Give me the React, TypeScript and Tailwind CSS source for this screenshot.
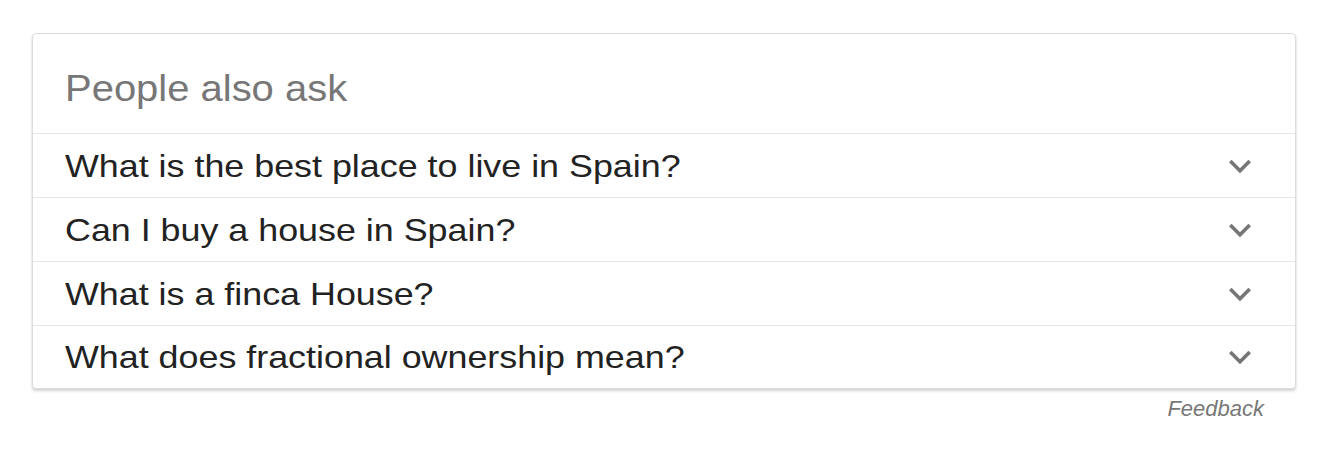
import React from "react";

const questions = [
  "What is the best place to live in Spain?",
  "Can I buy a house in Spain?",
  "What is a finca House?",
  "What does fractional ownership mean?",
];

function Chevron() {
  return (
    <svg width="44" height="44" viewBox="0 0 24 24" className="shrink-0">
      <path d="M16.59 8.59L12 13.17 7.41 8.59 6 10l6 6 6-6z" fill="#757575" />
    </svg>
  );
}

export default function App() {
  return (
    <div
      className="min-h-[450px] bg-white pt-[33px] pl-[32px]"
      style={{ fontFamily: '"Liberation Sans", Arial, sans-serif' }}
    >
      <div className="w-[1264px]">
        <div className="rounded-[4px] border border-[#dcdcdc] bg-white shadow-[0_2px_3px_rgba(0,0,0,0.18)]">
          <div className="h-[100px] border-b border-[#e6e6e6] pl-[32px] pt-[31px]">
            <div className="inline-block origin-left scale-x-[1.11] text-[36px] leading-[48px] text-[#777777]">
              People also ask
            </div>
          </div>
          {questions.map((q, i) => (
            <div
              key={q}
              className={
                "flex items-center justify-between pl-[32px] pr-[33px] " +
                (i < questions.length - 1 ? "h-[64px] border-b border-[#e6e6e6]" : "h-[62px]")
              }
            >
              <div className="inline-block origin-left scale-x-[1.12] text-[32px] leading-[40px] text-[#222222]">
                {q}
              </div>
              <Chevron />
            </div>
          ))}
        </div>
        <div className="pr-[32px] pt-[6px] text-right text-[22px] italic leading-[28px] text-[#777777]">
          Feedback
        </div>
      </div>
    </div>
  );
}
